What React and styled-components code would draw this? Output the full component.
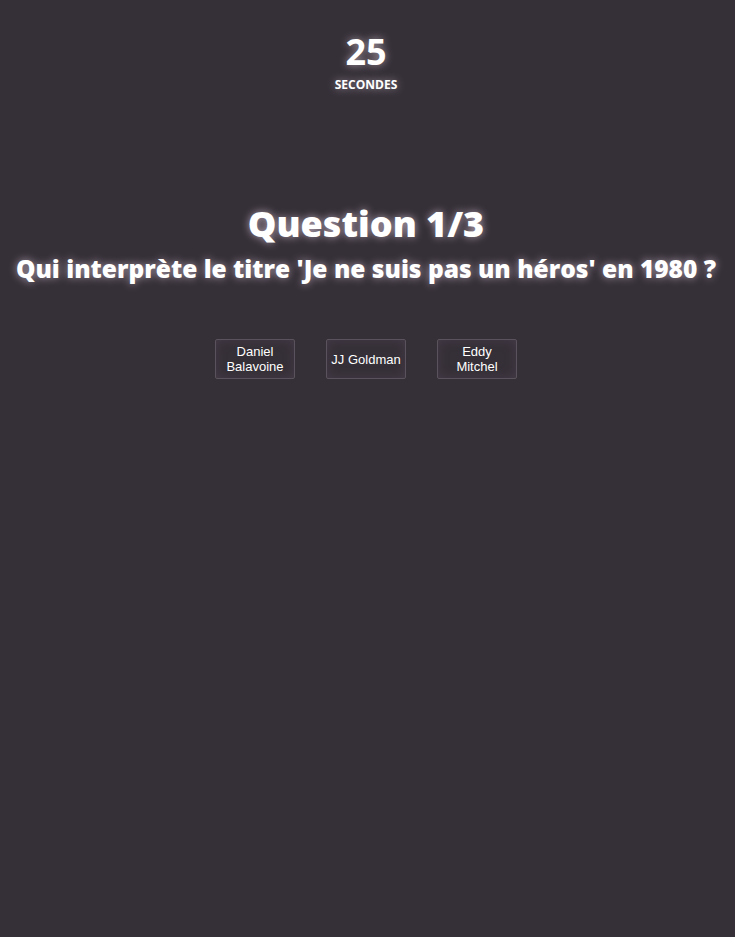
import styled, { createGlobalStyle } from "styled-components";

const GlobalStyle = createGlobalStyle`
  html, body {
    margin: 0;
    padding: 0;
    background: #352f37;
  }
  body {
    min-height: 937px;
    font-family: "Open Sans", "Noto Sans", sans-serif;
    color: #fff;
  }
`;

const answers = ["Daniel Balavoine", "JJ Goldman", "Eddy Mitchel"];

const App = () => {
  return (
    <Page>
      <GlobalStyle />
      <Timer>
        <Seconds>25</Seconds>
        <Unit>SECONDES</Unit>
      </Timer>
      <QuestionBlock>
        <Title>Question 1/3</Title>
        <Text>Qui interprète le titre 'Je ne suis pas un héros' en 1980 ?</Text>
      </QuestionBlock>
      <Answers>
        {answers.map((a) => (
          <Answer key={a}>{a}</Answer>
        ))}
      </Answers>
    </Page>
  );
};

const Page = styled.div`
  display: flex;
  flex-direction: column;
  align-items: center;
  padding-top: 32px;
  padding-right: 3px;
`;

const Timer = styled.div`
  display: flex;
  flex-direction: column;
  align-items: center;
  text-shadow: 0 0 8px rgba(255, 240, 255, 0.55);
`;

const Seconds = styled.div`
  font-size: 36px;
  font-weight: 700;
  line-height: 40px;
`;

const Unit = styled.div`
  margin-top: 5px;
  font-size: 12px;
  font-weight: 700;
  line-height: 16px;
`;

const QuestionBlock = styled.div`
  margin-top: 108px;
  display: flex;
  flex-direction: column;
  align-items: center;
  text-shadow: 0 0 8px rgba(255, 235, 255, 0.6);
`;

const Title = styled.h1`
  margin: 0;
  font-size: 36px;
  font-weight: 800;
  line-height: 46px;
`;

const Text = styled.h2`
  margin: 5px 0 0;
  font-size: 24.5px;
  font-weight: 800;
  line-height: 34px;
  white-space: nowrap;
`;

const Answers = styled.div`
  margin-top: 53px;
  display: flex;
  gap: 31px;
`;

const Answer = styled.button`
  width: 80px;
  height: 40px;
  padding: 0 4px;
  background: transparent;
  border: 1px solid #5a525c;
  border-radius: 2px;
  color: #fff;
  font-family: "Liberation Sans", Arial, sans-serif;
  font-size: 13px;
  line-height: 15px;
  box-shadow: inset 0 0 12px rgba(120, 100, 125, 0.25);
`;

export default App;
